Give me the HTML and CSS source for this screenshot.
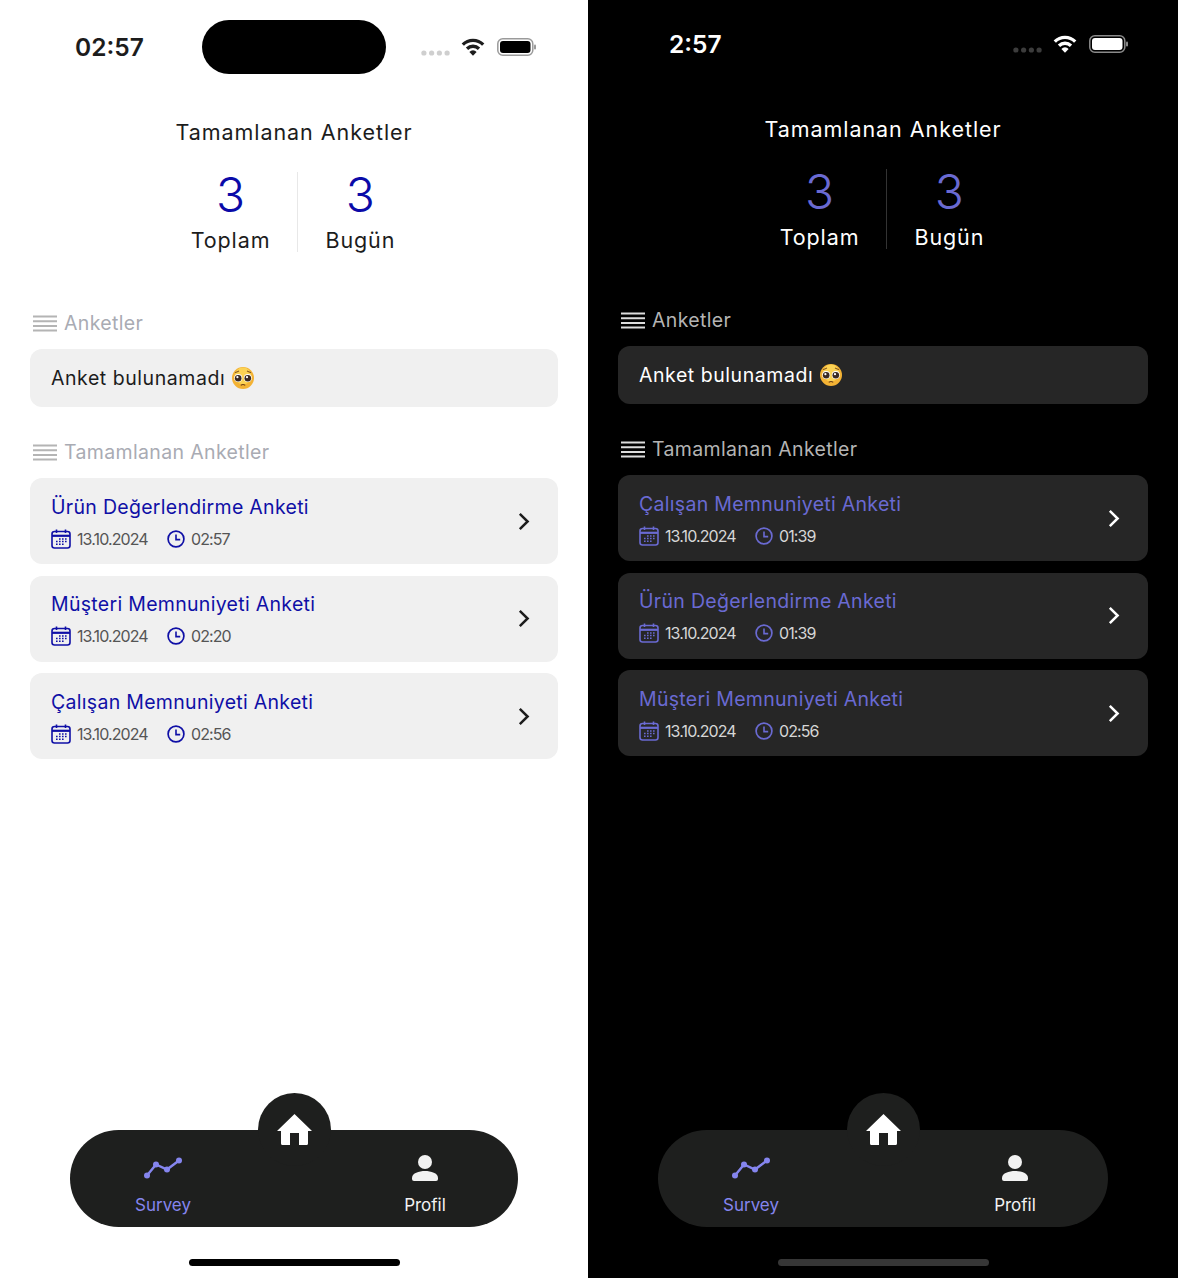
FILE: index.html
```html
<!DOCTYPE html>
<html lang="en">
<head>
<meta charset="UTF-8">
<meta name="viewport" content="width=device-width, initial-scale=1.0">
<title>Tamamlanan Anketler</title>
<link rel="stylesheet" href="styles.css">
</head>
<body>
<svg class="sprite" aria-hidden="true">
    <symbol id="i-wifi" viewBox="0 0 24 18">
        <path d="M1.8 6.6A14.5 14.5 0 0 1 22.2 6.6M6 10.7A8.6 8.6 0 0 1 18 10.7" fill="none" stroke="currentColor" stroke-width="3.3"/>
        <path d="M12 17.8L8.4 13.9A5 5 0 0 1 15.6 13.9Z" fill="currentColor"/>
    </symbol>
    <symbol id="i-dots" viewBox="0 0 30 6">
        <circle cx="3" cy="3" r="2.7"/><circle cx="11" cy="3" r="2.7"/><circle cx="19" cy="3" r="2.7"/><circle cx="27" cy="3" r="2.7"/>
    </symbol>
    <symbol id="i-menu" viewBox="0 0 24 17">
        <path d="M0 1.5H24M0 6.2H24M0 10.9H24M0 15.6H24" stroke="currentColor" stroke-width="2"/>
    </symbol>
    <symbol id="i-calendar" viewBox="0 0 20 20">
        <rect x="1" y="2.5" width="18" height="16.5" rx="2.5" fill="none" stroke="currentColor" stroke-width="1.6"/>
        <path d="M1 6.8H19" stroke="currentColor" stroke-width="2.2"/>
        <path d="M5.5 .5V4M14.5 .5V4" stroke="currentColor" stroke-width="1.6"/>
        <path d="M8 10H9.6M11 10H12.6M14 10H15.6M5 12.6H6.6M8 12.6H9.6M11 12.6H12.6M14 12.6H15.6M5 15.2H6.6M8 15.2H9.6M11 15.2H12.6" stroke="currentColor" stroke-width="1.5"/>
    </symbol>
    <symbol id="i-clock" viewBox="0 0 18 18">
        <circle cx="9" cy="9" r="7.9" fill="none" stroke="currentColor" stroke-width="1.7"/>
        <path d="M9 4.4V9.6H13.2" fill="none" stroke="currentColor" stroke-width="1.6"/>
    </symbol>
    <symbol id="i-chevron" viewBox="0 0 12 19">
        <path d="M1.8 1.8L9.6 9.5L1.8 17.2" fill="none" stroke="currentColor" stroke-width="2.5"/>
    </symbol>
    <symbol id="i-home" viewBox="0 0 35 31">
        <path d="M17.5 0L35 17H31V29.5A1.5 1.5 0 0 1 29.5 31H22V19H13V31H5.5A1.5 1.5 0 0 1 4 29.5V17H0Z" fill="currentColor"/>
    </symbol>
    <symbol id="i-chart" viewBox="0 0 38 21">
        <path d="M3 18L12 7L23 12L35 3" fill="none" stroke="currentColor" stroke-width="2.4"/>
        <circle cx="3" cy="18" r="3" fill="currentColor"/><circle cx="12" cy="7" r="3" fill="currentColor"/>
        <circle cx="23" cy="12" r="3" fill="currentColor"/><circle cx="35" cy="3" r="3" fill="currentColor"/>
    </symbol>
    <symbol id="i-person" viewBox="0 0 26 26">
        <circle cx="13" cy="7" r="7" fill="currentColor"/>
        <path d="M0 24V23C0 18 7 16 13 16S26 18 26 23V24A2 2 0 0 1 24 26H2A2 2 0 0 1 0 24Z" fill="currentColor"/>
    </symbol>
    <symbol id="i-face" viewBox="0 0 22 22">
        <circle cx="11" cy="11" r="11" fill="#f3b234"/>
        <circle cx="11" cy="9" r="8.4" fill="#fbd254"/>
        <circle cx="6.2" cy="11" r="4" fill="#fff"/><circle cx="15.8" cy="11" r="4" fill="#fff"/>
        <circle cx="6.2" cy="11.2" r="3.3" fill="#3a2a22"/><circle cx="15.8" cy="11.2" r="3.3" fill="#3a2a22"/>
        <circle cx="5.4" cy="10.2" r="1.1" fill="#fff"/><circle cx="15" cy="10.2" r="1.1" fill="#fff"/>
        <path d="M3 5.8L7 4M19 5.8L15 4" stroke="#8a5a1e" stroke-width="1.1"/>
        <path d="M8.8 18.4Q11 16.6 13.2 18.4" fill="none" stroke="#6b3f16" stroke-width="1.2"/>
    </symbol>
</svg>

<!-- light -->
<section class="pane pane-light">
    <div class="status">
        <span class="clock">02:57</span>
        <span class="island"></span>
        <div class="status-icons">
            <svg class="ic-dots"><use href="#i-dots"/></svg>
            <svg class="ic-wifi"><use href="#i-wifi"/></svg>
            <svg class="ic-battery" viewBox="0 0 39 18">
                <rect class="bat-line" x=".8" y=".8" width="35" height="16.4" rx="5"/>
                <rect class="bat-fill" x="3" y="3" width="30.5" height="12" rx="3"/>
                <rect class="bat-nub" x="37" y="6.5" width="2" height="5" rx="1"/>
            </svg>
        </div>
    </div>

    <h1 class="title">Tamamlanan Anketler</h1>
    <div class="stats">
        <div class="stat"><span class="stat-num">3</span><span class="stat-label">Toplam</span></div>
        <div class="stat"><span class="stat-num">3</span><span class="stat-label">Bugün</span></div>
    </div>

    <div class="section-head first"><svg class="ic-menu"><use href="#i-menu"/></svg>Anketler</div>
    <div class="card card-empty">Anket bulunamadı <svg class="ic-face"><use href="#i-face"/></svg></div>

    <div class="section-head"><svg class="ic-menu"><use href="#i-menu"/></svg>Tamamlanan Anketler</div>
    <div class="list">
        <div class="card card-survey">
            <div>
                <div class="survey-name">Ürün Değerlendirme Anketi</div>
                <div class="meta">
                    <svg class="ic-cal"><use href="#i-calendar"/></svg><span class="meta-date">13.10.2024</span>
                    <svg class="ic-clock"><use href="#i-clock"/></svg><span>02:57</span>
                </div>
            </div>
            <svg class="ic-chevron"><use href="#i-chevron"/></svg>
        </div>
        <div class="card card-survey">
            <div>
                <div class="survey-name">Müşteri Memnuniyeti Anketi</div>
                <div class="meta">
                    <svg class="ic-cal"><use href="#i-calendar"/></svg><span class="meta-date">13.10.2024</span>
                    <svg class="ic-clock"><use href="#i-clock"/></svg><span>02:20</span>
                </div>
            </div>
            <svg class="ic-chevron"><use href="#i-chevron"/></svg>
        </div>
        <div class="card card-survey">
            <div>
                <div class="survey-name">Çalışan Memnuniyeti Anketi</div>
                <div class="meta">
                    <svg class="ic-cal"><use href="#i-calendar"/></svg><span class="meta-date">13.10.2024</span>
                    <svg class="ic-clock"><use href="#i-clock"/></svg><span>02:56</span>
                </div>
            </div>
            <svg class="ic-chevron"><use href="#i-chevron"/></svg>
        </div>
    </div>

    <nav class="tabbar">
        <span class="tab-home"><svg class="ic-home"><use href="#i-home"/></svg></span>
        <div class="tab tab-active"><svg class="ic-chart"><use href="#i-chart"/></svg><span>Survey</span></div>
        <div class="tab"><svg class="ic-person"><use href="#i-person"/></svg><span>Profil</span></div>
    </nav>
    <div class="home-bar"></div>
</section>

<!-- dark -->
<section class="pane pane-dark">
    <div class="status">
        <span class="clock">2:57</span>
        <div class="status-icons">
            <svg class="ic-dots"><use href="#i-dots"/></svg>
            <svg class="ic-wifi"><use href="#i-wifi"/></svg>
            <svg class="ic-battery" viewBox="0 0 39 18">
                <rect class="bat-line" x=".8" y=".8" width="35" height="16.4" rx="5"/>
                <rect class="bat-fill" x="3" y="3" width="30.5" height="12" rx="3"/>
                <rect class="bat-nub" x="37" y="6.5" width="2" height="5" rx="1"/>
            </svg>
        </div>
    </div>

    <h1 class="title">Tamamlanan Anketler</h1>
    <div class="stats">
        <div class="stat"><span class="stat-num">3</span><span class="stat-label">Toplam</span></div>
        <div class="stat"><span class="stat-num">3</span><span class="stat-label">Bugün</span></div>
    </div>

    <div class="section-head first"><svg class="ic-menu"><use href="#i-menu"/></svg>Anketler</div>
    <div class="card card-empty">Anket bulunamadı <svg class="ic-face"><use href="#i-face"/></svg></div>

    <div class="section-head"><svg class="ic-menu"><use href="#i-menu"/></svg>Tamamlanan Anketler</div>
    <div class="list">
        <div class="card card-survey">
            <div>
                <div class="survey-name">Çalışan Memnuniyeti Anketi</div>
                <div class="meta">
                    <svg class="ic-cal"><use href="#i-calendar"/></svg><span class="meta-date">13.10.2024</span>
                    <svg class="ic-clock"><use href="#i-clock"/></svg><span>01:39</span>
                </div>
            </div>
            <svg class="ic-chevron"><use href="#i-chevron"/></svg>
        </div>
        <div class="card card-survey">
            <div>
                <div class="survey-name">Ürün Değerlendirme Anketi</div>
                <div class="meta">
                    <svg class="ic-cal"><use href="#i-calendar"/></svg><span class="meta-date">13.10.2024</span>
                    <svg class="ic-clock"><use href="#i-clock"/></svg><span>01:39</span>
                </div>
            </div>
            <svg class="ic-chevron"><use href="#i-chevron"/></svg>
        </div>
        <div class="card card-survey">
            <div>
                <div class="survey-name">Müşteri Memnuniyeti Anketi</div>
                <div class="meta">
                    <svg class="ic-cal"><use href="#i-calendar"/></svg><span class="meta-date">13.10.2024</span>
                    <svg class="ic-clock"><use href="#i-clock"/></svg><span>02:56</span>
                </div>
            </div>
            <svg class="ic-chevron"><use href="#i-chevron"/></svg>
        </div>
    </div>

    <nav class="tabbar">
        <span class="tab-home"><svg class="ic-home"><use href="#i-home"/></svg></span>
        <div class="tab tab-active"><svg class="ic-chart"><use href="#i-chart"/></svg><span>Survey</span></div>
        <div class="tab"><svg class="ic-person"><use href="#i-person"/></svg><span>Profil</span></div>
    </nav>
    <div class="home-bar"></div>
</section>
</body>
</html>
```

FILE: styles.css
```css
body {
    margin: 0;
    display: flex;
    width: 1178px;
    height: 1278px;
    overflow: hidden;
    font-family: Inter, "Noto Sans", sans-serif;
}

.sprite {
    width: 0;
    height: 0;
    position: absolute;
}

.pane {
    display: flex;
    flex-direction: column;
    box-sizing: border-box;
    height: 1278px;
    padding: 0 30px 12px;
    color: var(--text);
    background-color: var(--bg);
}

.pane-light {
    width: 588px;
    --bg: #fff;
    --text: #1c1c1c;
    --muted: #a9abb3;
    --menu: #b4b4b4;
    --card: #f0f0f0;
    --accent: #0f0fa6;
    --stat: #0a0aa8;
    --meta: #555;
    --rule: #e8e8e8;
    --dots: #cfcfcf;
    --bat-line: #9a9a9a;
    --bat-fill: #000;
    --bar: #000;
}

.pane-dark {
    width: 590px;
    --bg: #000;
    --text: #fff;
    --muted: #b4b4b4;
    --menu: #dcdcdc;
    --card: #262626;
    --accent: #6a6ad2;
    --stat: #6a6ad2;
    --meta: #d6d6d6;
    --rule: #333;
    --dots: #3c3c3c;
    --bat-line: #8a8a8a;
    --bat-fill: #fff;
    --bar: #363636;
}

/* status bar */
.status {
    display: flex;
    align-items: center;
    height: 54px;
    margin-top: 20px;
}

.pane-light .status {
    padding: 0 22px 0 45px;
}

.pane-dark .status {
    margin-top: 17px;
    padding: 0 20px 0 51px;
}

.clock {
    font-size: 24.5px;
    font-weight: 600;
}

.pane-light .clock {
    width: 127px;
}

.island {
    width: 184px;
    height: 54px;
    border-radius: 27px;
    background-color: #000;
}

.status-icons {
    display: flex;
    align-items: center;
    margin-left: auto;
}

.ic-dots {
    width: 29px;
    height: 6px;
    margin: 12px 11px 0 0;
    fill: var(--dots);
}

.ic-wifi {
    width: 24px;
    height: 18px;
    margin-right: 12px;
}

.ic-battery {
    width: 39px;
    height: 18px;
}

.bat-line {
    fill: none;
    stroke: var(--bat-line);
    stroke-width: 1.5;
}

.bat-fill {
    fill: var(--bat-fill);
}

.bat-nub {
    fill: var(--bat-line);
}

/* summary */
.title {
    margin: 44px 0 0;
    font-size: 21.5px;
    font-weight: 400;
    line-height: 28px;
    letter-spacing: 0.95px;
    text-align: center;
}

.stats {
    display: flex;
    justify-content: center;
    height: 80px;
    margin-top: 26px;
    padding-right: 2px;
}

.stat {
    display: flex;
    flex-direction: column;
    align-items: center;
    padding: 0 27px;
}

.stat + .stat {
    border-left: 1px solid var(--rule);
}

.stat-num {
    font-size: 48px;
    font-weight: 300;
    line-height: 46px;
    color: var(--stat);
}

.stat-label {
    margin-top: 9px;
    font-size: 21.5px;
    line-height: 26px;
    letter-spacing: 0.9px;
}

/* lists */
.section-head {
    display: flex;
    align-items: center;
    height: 24px;
    margin: 33px 0 14px;
    font-size: 19.5px;
    letter-spacing: 0.35px;
    color: var(--muted);
}

.section-head.first {
    margin-top: 59px;
}

.ic-menu {
    width: 24px;
    height: 17px;
    margin: 0 7px 0 3px;
    color: var(--menu);
}

.card {
    display: flex;
    align-items: center;
    box-sizing: border-box;
    padding: 0 21px;
    border-radius: 12px;
    background-color: var(--card);
}

.card-empty {
    height: 58px;
    font-size: 19.5px;
    letter-spacing: 0.55px;
}

.ic-face {
    width: 22px;
    height: 22px;
    margin-left: 7px;
}

.list {
    display: flex;
    flex-direction: column;
    gap: 11.5px;
}

.card-survey {
    justify-content: space-between;
    height: 86px;
}

.survey-name {
    font-size: 19.5px;
    line-height: 26px;
    letter-spacing: 0.3px;
    color: var(--accent);
}

.meta {
    display: flex;
    align-items: center;
    margin-top: 9px;
    font-size: 16px;
    line-height: 20px;
    letter-spacing: -0.9px;
    color: var(--meta);
}

.ic-cal {
    width: 20px;
    height: 20px;
    margin-right: 6px;
    color: var(--accent);
}

.meta-date {
    width: 90px;
}

.ic-clock {
    width: 18px;
    height: 18px;
    margin-right: 6px;
    color: var(--accent);
}

.ic-chevron {
    width: 12px;
    height: 19px;
    margin-right: 7px;
    color: var(--text);
}

/* tab bar */
.tabbar {
    position: relative;
    display: flex;
    justify-content: space-between;
    box-sizing: border-box;
    height: 97px;
    margin: auto 40px 0;
    padding: 25px 43px 0;
    border-radius: 49px;
    background-color: #1e1f1e;
}

.tab-home {
    position: absolute;
    top: -37px;
    left: 50%;
    display: flex;
    justify-content: center;
    box-sizing: border-box;
    width: 73px;
    height: 73px;
    margin-left: -36.5px;
    padding-top: 21px;
    border-radius: 50%;
    background-color: #1e1f1e;
}

.ic-home {
    width: 35px;
    height: 31px;
    color: #fff;
}

.tab {
    display: flex;
    flex-direction: column;
    align-items: center;
    width: 100px;
    font-size: 17px;
    line-height: 20px;
    color: #f2f2f2;
}

.tab svg {
    height: 26px;
    margin-bottom: 14px;
}

.tab-active {
    color: #8585ee;
}

.ic-chart {
    width: 38px;
}

.ic-person {
    width: 26px;
}

.home-bar {
    flex: none;
    width: 211px;
    height: 7px;
    margin: 32px auto 0;
    border-radius: 4px;
    background-color: var(--bar);
}
```
